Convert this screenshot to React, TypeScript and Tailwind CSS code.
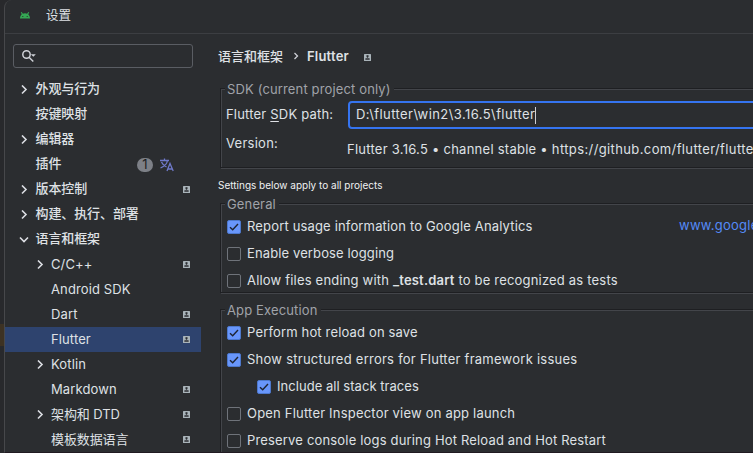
import React from 'react';

const SharedIcon = ({ className = '' }: { className?: string }) => (
  <svg className={`block shrink-0 ${className}`} width="7" height="7" viewBox="0 0 7 7">
    <rect width="7" height="7" rx="0.5" fill="#a9b3b9" />
    <rect x="2.500" y="1.200" width="2" height="2" fill="#2b2d30" />
    <rect x="1.300" y="4.300" width="4.400" height="1.400" rx="0.5" fill="#2b2d30" />
    <rect x="3" y="3" width="1" height="1.500" fill="#4a5056" />
  </svg>
);

const Arrow = ({ open = false }: { open?: boolean }) => (
  <svg className="block shrink-0" width="10" height="10" viewBox="0 0 10 10" fill="none" stroke="#dcdee3" strokeWidth="1.6">
    {open ? <path d="M1 2.500l4 4 4-4" /> : <path d="M3 .5l4 4-4 4" />}
  </svg>
);

const Check = ({ on = false }: { on?: boolean }) => (
  <span
    className={`flex h-[14px] w-[14px] shrink-0 items-center justify-center rounded-[2px] border ${
      on ? 'border-[#4d78cc] bg-[#6896fb]' : 'border-[#6f737a] bg-[#2b2d30]'
    }`}
  >
    {on && (
      <svg width="12" height="12" viewBox="0 0 12 12" fill="none" stroke="#1e2431" strokeWidth="1.4">
        <path d="M2 6.2l2.700 2.600L10 3" />
      </svg>
    )}
  </span>
);

type Node = { label: string; bold?: boolean; cjk?: boolean; arrow?: 'open' | 'closed'; child?: boolean; shared?: boolean; badge?: boolean; active?: boolean };

const nodes: Node[] = [
  { label: '外观与行为', arrow: 'closed', bold: true },
  { label: '按键映射', bold: true },
  { label: '编辑器', arrow: 'closed', bold: true },
  { label: '插件', badge: true, bold: true },
  { label: '版本控制', arrow: 'closed', shared: true, bold: true },
  { label: '构建、执行、部署', arrow: 'closed', bold: true },
  { label: '语言和框架', arrow: 'open', bold: true },
  { label: 'C/C++', arrow: 'closed', child: true, shared: true },
  { label: 'Android SDK', child: true },
  { label: 'Dart', child: true, shared: true },
  { label: 'Flutter', child: true, shared: true, active: true },
  { label: 'Kotlin', arrow: 'closed', child: true },
  { label: 'Markdown', child: true, shared: true },
  { label: '架构和 DTD', arrow: 'closed', child: true, shared: true, cjk: true },
  { label: '模板数据语言', child: true, shared: true, cjk: true },
];

const Row = ({ n }: { n: Node }) => (
  <div className={`flex h-[25px] items-center ${n.active ? 'bg-[#2e436e]' : ''} ${n.child ? 'pl-[30px]' : 'pl-[14px]'}`}>
    <span className="flex w-4 shrink-0">{n.arrow && <Arrow open={n.arrow === 'open'} />}</span>
    <span className={`flex-1 ${n.bold ? 'pb-[3px] pl-[0.5px] font-medium tracking-[-0.1px]' : n.cjk ? 'pb-[2px] tracking-[-0.1px]' : 'pb-[2px] tracking-[0.12px]'}`}>{n.label}</span>
    {n.badge && (
      <>
        <span className="mr-[7px] flex h-[14px] w-4 items-center justify-center rounded-full bg-[#7d8087] text-[13px] leading-none tracking-normal text-[#1e1f22]">1</span>
        <svg className="mr-[27px]" width="14" height="14" viewBox="0 0 14 14" fill="none" stroke="#6f79c9" strokeWidth="1.3">
          <path d="M0 2.500h9M4.500.5v2M1.500 4c1 2.500 3 4 5 5M7.500 2.500C7 6 4 8.500 .5 10" />
          <path d="M7 13l3-7.500 3.200 7.500M8 11h4.500" />
        </svg>
      </>
    )}
    {n.shared && <SharedIcon className="mr-[11px]" />}
  </div>
);

const Group = ({ title, className = '', children }: { title: string; className?: string; children: React.ReactNode }) => (
  <section className={`ml-[2px] w-[600px] border border-[#1e1f22] shadow-[1px_1px_0_#43454a,inset_1px_1px_0_#43454a] ${className}`}>
    <h2 className="ml-1 -mt-[9px] flex h-[18px] w-fit items-center bg-[#2b2d30] pr-[3px] pl-[2px] tracking-[0.14px] text-[#a0a3a9]">{title}</h2>
    {children}
  </section>
);

const Option = ({ on, indent, tracking = 'tracking-[0.16px]', children }: { on?: boolean; indent?: boolean; tracking?: string; children: React.ReactNode }) => (
  <div className={`flex h-[27px] items-center gap-[6px] pt-px whitespace-pre ${tracking} ${indent ? 'pl-9' : 'pl-[6px]'}`}>
    <Check on={on} />
    <span className="pb-[2px]">{children}</span>
  </div>
);

export default function App() {
  return (
    <div className="flex h-[453px] w-[753px] overflow-hidden bg-[#28292c] font-['Inter','Noto_Sans_CJK_SC',sans-serif] text-[13px] leading-5 text-[#dfe1e5]">
      <div className="w-1 shrink-0 pt-[324px]">
        <div className="h-[22px] bg-[#3d3223]" />
      </div>
      <div className="flex h-[453px] w-[749px] shrink-0 flex-col overflow-hidden rounded-tl-lg border-b border-l border-b-[#211a22] border-l-[#47484b] bg-[#2b2d30]">
        <header className="flex h-[34px] shrink-0 items-center border-b border-[#3c3e42] pb-[2px] pl-[15px]">
          <svg className="-mt-px" width="10" height="7" viewBox="0 0 10 7">
            <path d="M0 6.500C.1 4.500.8 3.200 1.800 2.300L.8.6 1.700 0l1.200 1.700a5 5 0 0 1 4.200 0L8.300 0l.9.6-1 1.700c1 .9 1.700 2.200 1.800 4.200z" fill="#34a853" />
            <path d="M2.300 4h1v1h-1zM6.700 4h1v1h-1z" fill="#2b2d30" />
          </svg>
          <span className="ml-4 text-[12.5px]">设置</span>
        </header>
        <div className="flex min-h-0 flex-1">
          <nav className="w-[196px] shrink-0 pt-[10px]">
            <div className="ml-2 flex h-6 w-[180px] items-center rounded-[3px] border border-[#5a5d63] pl-2">
              <svg width="15" height="13" viewBox="0 0 15 13" fill="none" stroke="#ced0d6" strokeWidth="1.5">
                <circle cx="4.500" cy="4.500" r="3.700" />
                <path d="M7 7.200l4.300 4.300" />
                <path d="M8.800 4.300h5L11.300 6.800z" fill="#ced0d6" stroke="none" />
              </svg>
            </div>
            <div className="mt-[9px]">
              {nodes.map((n) => <Row key={n.label} n={n} />)}
            </div>
          </nav>
          <main className="w-[600px] shrink-0 pt-3 pl-[17px] whitespace-nowrap">
            <div className="flex h-5 items-center">
              <span className="font-medium">语言和框架</span>
              <svg className="ml-[10px]" width="6" height="8" viewBox="0 0 6 8" fill="none" stroke="#ced0d6" strokeWidth="1.3"><path d="M1.500 1l3 3-3 3" /></svg>
              <span className="ml-2 font-semibold tracking-[0.2px]">Flutter</span>
              <SharedIcon className="mt-[3px] ml-[15px]" />
            </div>
            <Group title="SDK (current project only)" className="mt-[22px] h-[80px]">
              <div className="flex h-[34px] items-center">
                <span className="w-[127px] shrink-0 pb-[2px] pl-[5px] tracking-[0.2px]">Flutter <u className="underline-offset-2">S</u>DK path:</span>
                <div className="flex h-7 flex-1 items-center rounded-[4px] border-2 border-[#3574f0] pl-[6px] tracking-[0.42px]">
                  <span className="pb-[2px]">D:\flutter\win2\3.16.5\flutter</span><i className="h-[17px] w-px bg-[#ced0d6]" />
                </div>
              </div>
              <div className="mt-px flex tracking-[0.26px]">
                <span className="w-[126px] shrink-0 pl-[5px]">Version:</span>
                <span className="pt-[6px]">Flutter 3.16.5 • channel stable • <span className="tracking-[0.38px]">https://github.com/flutter/flutter.git</span></span>
              </div>
            </Group>
            <p className="mt-[7px] h-5 text-[10px] text-[#f0f1f2]">Settings below apply to all projects</p>
            <Group title="General" className="mt-2 h-[90px]">
              <div className="flex">
                <div className="w-[458px] shrink-0"><Option on>Report usage information to Google Analytics</Option></div>
                <a className="pt-[2px] tracking-[0.25px] text-[#548af7]">www.google.com/policies/privacy</a>
              </div>
              <Option tracking="tracking-[0.12px]">Enable verbose logging</Option>
              <Option tracking="tracking-[0.19px]">Allow files ending with <b className="font-semibold">_test.dart</b> to be recognized as tests</Option>
            </Group>
            <Group title="App Execution" className="mt-4 h-[180px]">
              <Option on>Perform hot reload on save</Option>
              <Option on tracking="tracking-[0.25px]">Show structured errors for Flutter framework issues</Option>
              <Option on indent tracking="tracking-[0.04px]">Include all stack traces</Option>
              <Option tracking="tracking-[0.2px]">Open Flutter Inspector view on app launch</Option>
              <Option tracking="tracking-[0.17px]">Preserve console logs during Hot Reload and Hot Restart</Option>
            </Group>
          </main>
        </div>
      </div>
    </div>
  );
}
